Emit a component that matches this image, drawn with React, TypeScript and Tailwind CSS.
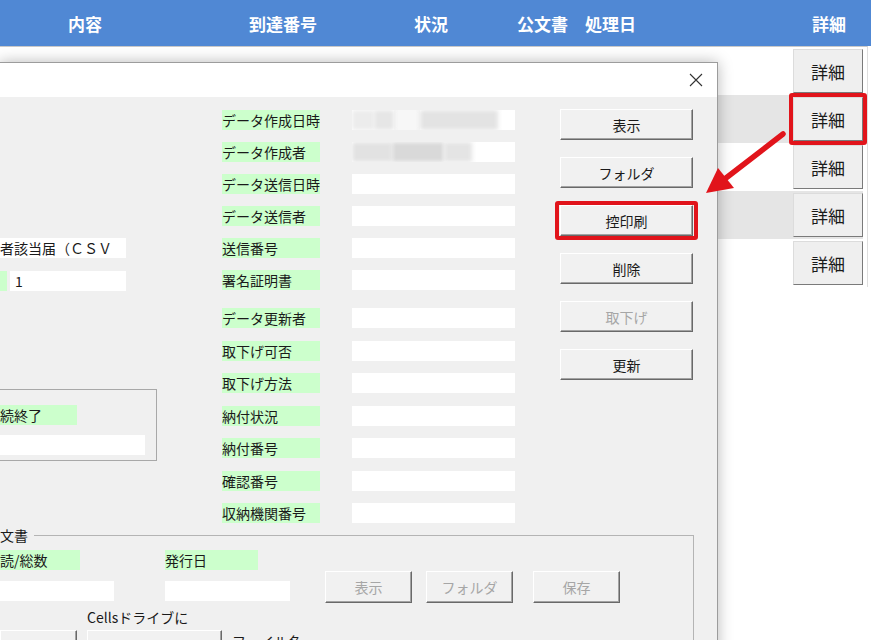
import React from 'react';

const font = "font-['Noto_Sans_CJK_JP','Noto_Sans',sans-serif]";

const topRows = [false, true, false, true, false];

const Label = ({ children, className = '' }: { children?: React.ReactNode; className?: string }) => (
  <div className={`h-[20px] bg-[#ccffcc] text-[14px] leading-[20px] text-[#1a1a1a] whitespace-nowrap overflow-hidden ${className}`}>
    {children}
  </div>
);

const Field = ({ children, className = '' }: { children?: React.ReactNode; className?: string }) => (
  <div className={`h-[20px] bg-white text-[14px] leading-[20px] text-[#1a1a1a] whitespace-nowrap overflow-hidden ${className}`}>
    {children}
  </div>
);

const FormButton = ({ label, disabled, className = '' }: { label: string; disabled?: boolean; className?: string }) => (
  <div
    className={`flex items-center justify-center bg-[#f1f1f1] border border-t-white border-l-white border-b-[#696969] border-r-[#696969] shadow-[inset_-1px_-1px_0_#a3a3a3] text-[14px] leading-none ${
      disabled ? 'text-[#a6a6a6]' : 'text-[#1a1a1a]'
    } ${className}`}
  >
    {label}
  </div>
);

const firstGroup = ['データ作成日時', 'データ作成者', 'データ送信日時', 'データ送信者', '送信番号', '署名証明書'];
const secondGroup = ['データ更新者', '取下げ可否', '取下げ方法', '納付状況', '納付番号', '確認番号', '収納機関番号'];

export default function App() {
  return (
    <div className={`relative w-[871px] h-[640px] overflow-hidden bg-white ${font}`}>
      {/* sheet header */}
      <div className="h-[46px] bg-[#5088d4] flex items-center pl-[68px] text-white text-[17px] font-bold leading-none whitespace-nowrap">
        <div className="w-[181px]">内容</div>
        <div className="w-[165px]">到達番号</div>
        <div className="w-[103px]">状況</div>
        <div className="w-[68px]">公文書</div>
        <div className="w-[227px]">処理日</div>
        <div>詳細</div>
      </div>
      <div className="w-[868px] border-t border-[#c9c9c9] border-r border-r-[#dedede]">
        {topRows.map((grey, i) => (
          <div key={i} className={`w-[863px] h-[48px] flex justify-end pt-[2px] ${grey ? 'bg-[#e5e5e5]' : 'bg-white'}`}>
            <div className="relative w-[70px] h-[44px]">
              <div className="w-full h-full flex items-center justify-center bg-[#efefef] border border-t-[#dcdcdc] border-l-[#dcdcdc] border-b-[#7a7a7a] border-r-[#7a7a7a] text-[17px] text-[#1a1a1a] leading-none">
                詳細
              </div>
              {i === 1 && <div className="absolute -inset-[4px] border-[4px] border-[#e1141b] rounded-[3px]" />}
            </div>
          </div>
        ))}
      </div>

      {/* dialog window */}
      <div className="absolute left-[-1px] top-[62px] w-[719px] h-[600px] border border-[#9c9c9c] bg-[#f0f0f0] shadow-[0_0_14px_rgba(0,0,0,0.28)]">
        <div className="h-[34px] bg-white flex items-center justify-end pr-[14px]">
          <svg width="14" height="14" viewBox="0 0 14 14">
            <path d="M1 1 L13 13 M13 1 L1 13" stroke="#333" strokeWidth="1.1" fill="none" />
          </svg>
        </div>

        <div className="flex h-[438px] pt-[13px]">
          {/* left column (cut off) */}
          <div className="w-[222px] flex flex-col">
            <Field className="mt-[128px] w-[126px]">者該当届（ＣＳＶ</Field>
            <div className="mt-[13px] flex">
              <Label className="w-[7px]" />
              <Field className="ml-[3px] w-[116px] pl-[5px]">1</Field>
            </div>
            <div className="mt-[98px] w-[157px] h-[72px] border-y border-r border-[#a8a8a8] pt-[15px]">
              <Label className="w-[77px] h-[19px] leading-[19px]">続終了</Label>
              <Field className="mt-[10px] w-[145px] h-[19px]" />
            </div>
          </div>

          {/* middle column */}
          <div className="w-[338px] flex flex-col">
            <div className="flex flex-col gap-[12px]">
              {firstGroup.map((t, i) => (
                <div key={t} className="flex">
                  <Label className="w-[98px]">{t}</Label>
                  <Field className="ml-[32px] w-[163px]">
                    {i === 0 && (
                      <div className="flex h-full">
                        <div className="w-[22px] h-full bg-[#ececec] blur-[2px]" />
                        <div className="w-[20px] h-full bg-[#e6e6e6] blur-[2px]" />
                        <div className="w-[26px] h-full bg-[#f7f7f7]" />
                        <div className="w-[78px] h-full bg-[#e3e3e3] blur-[2px]" />
                      </div>
                    )}
                    {i === 1 && (
                      <div className="flex h-full">
                        <div className="w-[40px] h-full bg-[#e2e2e2] blur-[2px]" />
                        <div className="w-[52px] h-full bg-[#d9d9d9] blur-[2px]" />
                        <div className="w-[28px] h-full bg-[#e4e4e4] blur-[2px]" />
                      </div>
                    )}
                  </Field>
                </div>
              ))}
            </div>
            <div className="mt-[18px] flex flex-col gap-[12.5px]">
              {secondGroup.map(t => (
                <div key={t} className="flex">
                  <Label className="w-[98px]">{t}</Label>
                  <Field className="ml-[32px] w-[163px]" />
                </div>
              ))}
            </div>
          </div>

          {/* right column buttons */}
          <div className="flex flex-col gap-[17px] mt-[-1px]">
            <FormButton label="表示" className="w-[133px] h-[31px]" />
            <FormButton label="フォルダ" className="w-[133px] h-[31px]" />
            <div className="relative">
              <FormButton label="控印刷" className="w-[133px] h-[31px]" />
              <div className="absolute -inset-x-[5px] -inset-y-[4px] border-[4px] border-[#e1141b] rounded-[3px]" />
            </div>
            <FormButton label="削除" className="w-[133px] h-[31px]" />
            <FormButton label="取下げ" disabled className="w-[133px] h-[31px]" />
            <FormButton label="更新" className="w-[133px] h-[31px]" />
          </div>
        </div>

        {/* 文書 frame */}
        <div className="relative w-[694px] h-[200px] border-t border-r border-[#b4b4b4]">
          <div className="absolute left-0 top-[-11px] bg-[#f0f0f0] pr-[6px] text-[14px] leading-[20px] text-[#1a1a1a]">文書</div>
          <div className="flex pt-[14px]">
            <div className="w-[165px] flex flex-col">
              <Label className="w-[80px] h-[19px] leading-[19px]">読/総数</Label>
              <Field className="mt-[11px] w-[114px] h-[19px]" />
            </div>
            <div className="w-[160px] flex flex-col">
              <Label className="w-[93px] h-[19px] leading-[19px]">発行日</Label>
              <Field className="mt-[11px] w-[125px] h-[19px]" />
            </div>
            <div className="flex mt-[21px]">
              <FormButton label="表示" disabled className="w-[87px] h-[32px]" />
              <FormButton label="フォルダ" disabled className="ml-[14px] w-[87px] h-[32px]" />
              <FormButton label="保存" disabled className="ml-[20px] w-[87px] h-[32px]" />
            </div>
          </div>
          <div className="mt-[4px] pl-[87px] text-[14px] leading-[20px] text-[#1a1a1a]">Cellsドライブに</div>
          <div className="mt-[3px] flex items-start">
            <FormButton label="" className="w-[77px] h-[32px]" />
            <FormButton label="" className="ml-[10px] w-[135px] h-[32px]" />
            <div className="ml-[10px] mt-[1px] text-[14px] leading-[20px] text-[#1a1a1a]">ファイル名</div>
          </div>
        </div>
      </div>

      {/* red arrow */}
      <svg className="absolute left-0 top-0 pointer-events-none" width="871" height="640" viewBox="0 0 871 640">
        <path d="M783 134 L726 178" stroke="#e1141b" strokeWidth="5.5" strokeLinecap="round" fill="none" />
        <polygon points="706,193 718,168 734,188" fill="#e1141b" />
      </svg>
    </div>
  );
}
